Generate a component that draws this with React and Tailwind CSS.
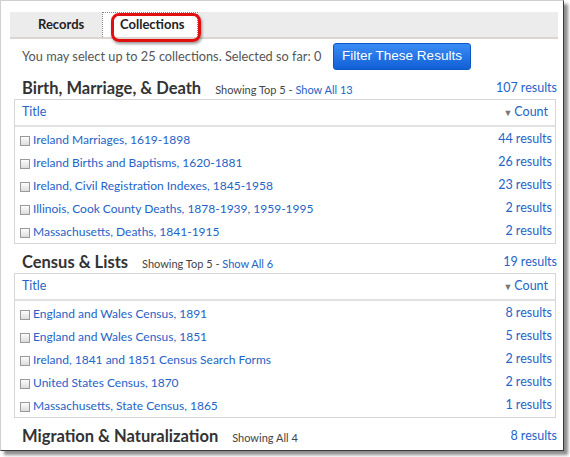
import React from "react";

const font = { fontFamily: "Lato, 'Open Sans', sans-serif" };

function Row({ title, count }) {
  return (
    <div className="flex items-center h-[23px] pl-[5px] pr-[3px]">
      <span className="w-[10px] h-[10px] mt-[2px] border border-[#9a9a9a] bg-gradient-to-b from-[#fdfdfd] to-[#dcdcdc] mr-[3px] shrink-0" />
      <span className="text-[#2463c8] text-[12px] leading-none">{title}</span>
      <span className="ml-auto text-[#2463c8] text-[12.5px] leading-none">{count}</span>
    </div>
  );
}

function Section({ title, showing, showAll, total, rows, mt }) {
  return (
    <div>
      <div className={"flex items-center h-[22px] pl-[8px] pr-[1px] " + mt}>
        <span className="text-[16.5px] font-bold text-[#333] leading-none">{title}</span>
        <span className="ml-[14px] mt-[3px] text-[11px] text-[#444] leading-none">
          {showing}
          {showAll && (
            <>
              {" - "}
              <span className="text-[#2463c8]">{showAll}</span>
            </>
          )}
        </span>
        <span className="ml-auto mt-[1px] text-[12.5px] text-[#2463c8] leading-none">{total}</span>
      </div>
      {rows && (
        <div className="mr-[2px] border border-[#d6d6d6]">
          <div className="flex items-center h-[27px] px-[7px] border-b-2 border-[#e2e2e2]">
            <span className="text-[12.5px] text-[#2463c8] leading-none">Title</span>
            <span className="ml-auto text-[12.5px] text-[#2463c8] leading-none flex items-center">
              <span className="text-[#777] text-[9px] mr-[2px]">▼</span>Count
            </span>
          </div>
          <div className="pt-[1px]">
            {rows.map((r) => (
              <Row key={r[0]} title={r[0]} count={r[1]} />
            ))}
          </div>
        </div>
      )}
    </div>
  );
}

export default function App() {
  return (
    <div className="w-[570px] h-[457px] bg-white relative" style={font}>
      <div className="w-[564px] h-[451px] border-l border-t border-l-[#cfcfcf] border-t-[#cfcfcf] border-r border-b border-r-[#3a3a3a] border-b-[#3a3a3a] shadow-[4px_4px_3px_rgba(0,0,0,0.45)] overflow-hidden bg-white">
        <div className="pl-[9px] pr-[5px] pt-[11px]">
          <div className="relative flex items-end h-[27px] bg-[#ececec] border-b-2 border-[#ddd6d0]">
            <div className="w-[92px] h-[25px] flex items-center pl-[28px] text-[13px] font-bold text-[#222]">
              Records
            </div>
            <div className="w-[96px] h-[25px] bg-white border border-dotted border-[#888] border-b-0 flex items-center pl-[17px] text-[13px] font-bold text-[#222]">
              Collections
            </div>
            <div className="absolute left-[101px] top-[1px] w-[90px] h-[29px] rounded-[8px] border-[3px] border-[#e01010] shadow-[1px_2px_3px_rgba(0,0,0,0.4)]" />
          </div>
          <div className="pl-[4px]">
            <div className="flex items-center h-[31px] mt-[2px] pl-[8px]">
              <span className="text-[12.75px] text-[#555]">You may select up to 25 collections. Selected so far: 0</span>
              <button className="ml-auto mr-[87px] w-[138px] h-[27px] rounded-[3px] bg-gradient-to-b from-[#3a8cf5] to-[#0f5fd6] border border-[#0d56c4] text-white text-[13.5px]" style={{ fontFamily: "'Liberation Sans', Arial, sans-serif" }}>
                Filter These Results
              </button>
            </div>
            <Section
              mt="mt-[5px]"
              title="Birth, Marriage, & Death"
              showing="Showing Top 5"
              showAll="Show All 13"
              total="107 results"
              rows={[
                ["Ireland Marriages, 1619-1898", "44 results"],
                ["Ireland Births and Baptisms, 1620-1881", "26 results"],
                ["Ireland, Civil Registration Indexes, 1845-1958", "23 results"],
                ["Illinois, Cook County Deaths, 1878-1939, 1959-1995", "2 results"],
                ["Massachusetts, Deaths, 1841-1915", "2 results"],
              ]}
            />
            <Section
              mt="mt-[7px]"
              title="Census & Lists"
              showing="Showing Top 5"
              showAll="Show All 6"
              total="19 results"
              rows={[
                ["England and Wales Census, 1891", "8 results"],
                ["England and Wales Census, 1851", "5 results"],
                ["Ireland, 1841 and 1851 Census Search Forms", "2 results"],
                ["United States Census, 1870", "2 results"],
                ["Massachusetts, State Census, 1865", "1 results"],
              ]}
            />
            <Section
              mt="mt-[7px]"
              title="Migration & Naturalization"
              showing="Showing All 4"
              total="8 results"
            />
          </div>
        </div>
      </div>
    </div>
  );
}
